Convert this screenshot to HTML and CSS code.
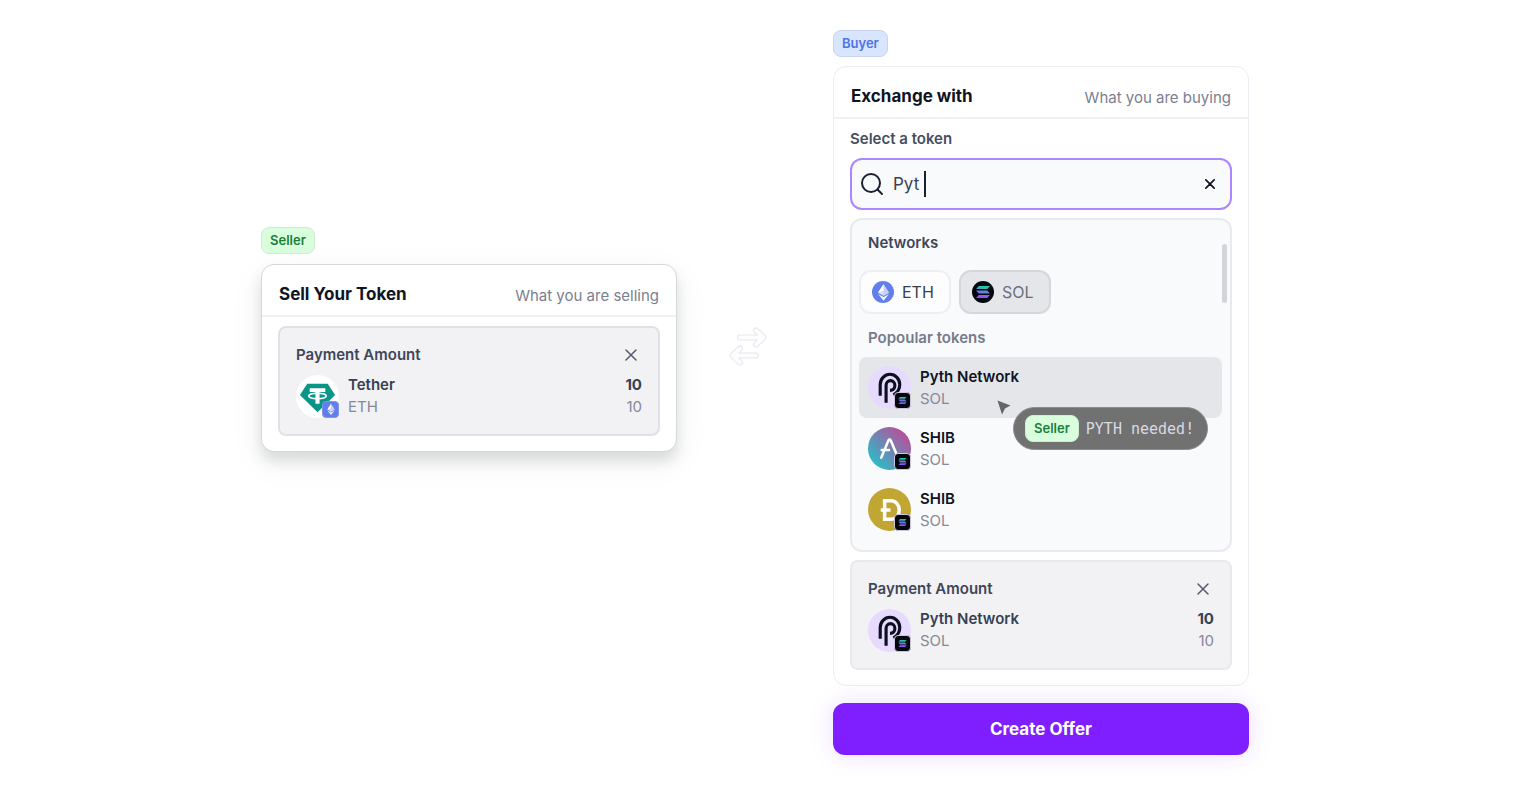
FILE: index.html
```html
<!DOCTYPE html>
<html lang="en">
<head>
    <meta charset="UTF-8">
    <meta name="viewport" content="width=device-width, initial-scale=1.0">
    <title>Token Exchange</title>
    <link rel="stylesheet" href="styles.css">
</head>
<body>
    <!-- Shared icons -->
    <svg class="sprite" aria-hidden="true">
        <defs>
            <linearGradient id="sol-gradient" x1="0" y1="1" x2="0.3" y2="0">
                <stop offset="0" stop-color="#9945ff"/>
                <stop offset="0.45" stop-color="#8065e8"/>
                <stop offset="1" stop-color="#22c5ad"/>
            </linearGradient>
            <linearGradient id="aave-gradient" x1="0" y1="1" x2="1" y2="0">
                <stop offset="0.15" stop-color="#2ebac6"/>
                <stop offset="0.85" stop-color="#b6509e"/>
            </linearGradient>
        </defs>
        <symbol id="close" viewBox="0 0 12 12">
            <path d="M1 1l10 10M11 1L1 11" fill="none" stroke="currentColor" stroke-linecap="round"/>
        </symbol>
        <symbol id="sol-mark" viewBox="0 0 16 14">
            <path d="M3 0h13l-3 3.600H0zM0 5.200h13l3 3.600H3zM3 10.400h13L13 14H0z" fill="url(#sol-gradient)"/>
        </symbol>
        <symbol id="eth-mark" viewBox="0 0 12 18">
            <path d="M6 0L0 9.200l6 3.300 6-3.300z" fill="#fff" opacity="0.75"/>
            <path d="M6 0v12.500l6-3.300z" fill="#c5d0fa"/>
            <path d="M6 0L0 9.200l6-2.500z" fill="#fff"/>
            <path d="M0 10.600L6 18l6-7.400-6 3.200z" fill="#eef1ff"/>
        </symbol>
        <symbol id="pyth" viewBox="0 0 44 44">
            <circle cx="22" cy="22" r="22" fill="#e6dafe"/>
            <path d="M12.500 30.500V19a10 10.500 0 0 1 20 0c0 5-2.500 8.500-6.500 10.500" fill="none" stroke="#0b0f1f" stroke-width="3.200"/>
            <path d="M18.500 37.500V20a4.500 5 0 0 1 9 0c0 3-2 5-5 5" fill="none" stroke="#0b0f1f" stroke-width="3.200"/>
        </symbol>
        <symbol id="tether" viewBox="0 0 44 44">
            <circle cx="22" cy="22" r="22" fill="#fff"/>
            <path d="M11.500 9h21L40 20.500 22 38 4 20.500z" fill="#0b9488"/>
            <path d="M14 13.500h16v4h-5.900v12h-4.200v-12H14z" fill="#fff"/>
            <ellipse cx="22" cy="21.500" rx="9" ry="2.800" fill="none" stroke="#fff" stroke-width="1.500"/>
        </symbol>
        <symbol id="aave" viewBox="0 0 44 44">
            <circle cx="22" cy="22" r="22" fill="url(#aave-gradient)"/>
            <path d="M13.500 31.500l7.500-18a1.200 1.200 0 0 1 2.200 0l6.300 15M14 23.500h7.500" fill="none" stroke="#fff" stroke-width="2.600" stroke-linecap="round"/>
        </symbol>
        <symbol id="doge" viewBox="0 0 44 44">
            <circle cx="22" cy="22" r="22" fill="#c2a633"/>
            <path d="M17 13h6.500a8.500 9.500 0 0 1 0 19H17zM13 22.500h10" fill="none" stroke="#fff" stroke-width="3.600"/>
        </symbol>
    </svg>

    <main class="exchange">
        <section class="side seller">
            <span class="tag tag-seller">Seller</span>
            <div class="card">
                <header class="card-header">
                    <h2>Sell Your Token</h2>
                    <p>What you are selling</p>
                </header>
                <div class="card-body">
                    <div class="payment">
                        <div class="payment-top">
                            <h3>Payment Amount</h3>
                            <button type="button" class="close" aria-label="Remove"><svg><use href="#close"/></svg></button>
                        </div>
                        <div class="token">
                            <span class="token-icon">
                                <svg class="coin"><use href="#tether"/></svg>
                                <span class="badge badge-eth"><svg><use href="#eth-mark"/></svg></span>
                            </span>
                            <span class="token-text"><strong>Tether</strong><small>ETH</small></span>
                            <span class="token-text amount"><strong>10</strong><small>10</small></span>
                        </div>
                    </div>
                </div>
            </div>
        </section>

        <!-- The dashed outline is the wide stroke showing round the narrow one -->
        <svg class="swap" viewBox="0 0 40 40" aria-hidden="true">
            <path class="swap-edge" d="M12 11.500h23M28 4.500l7.500 7-7.500 7M28 29.500H5M12 22.500l-7.500 7 7.500 7"/>
            <path class="swap-fill" d="M12 11.500h23M28 4.500l7.500 7-7.500 7M28 29.500H5M12 22.500l-7.500 7 7.500 7"/>
        </svg>

        <section class="side buyer">
            <span class="tag tag-buyer">Buyer</span>
            <div class="card card-flat">
                <header class="card-header">
                    <h2>Exchange with</h2>
                    <p>What you are buying</p>
                </header>
                <div class="card-body">
                    <label class="search-label" for="token-search">Select a token</label>
                    <div class="search">
                        <svg class="search-icon" viewBox="0 0 24 24" aria-hidden="true">
                            <circle cx="11" cy="11" r="9"/>
                            <path d="M17.500 17.500L22 22"/>
                        </svg>
                        <input type="text" id="token-search" value="Pyt" autocomplete="off">
                        <span class="caret"></span>
                        <button type="button" class="clear" aria-label="Clear"><svg><use href="#close"/></svg></button>
                    </div>

                    <div class="dropdown">
                        <span class="scrollbar"></span>
                        <h3>Networks</h3>
                        <div class="networks">
                            <button type="button" class="network">
                                <span class="network-icon network-eth"><svg><use href="#eth-mark"/></svg></span>ETH
                            </button>
                            <button type="button" class="network selected">
                                <span class="network-icon network-sol"><svg><use href="#sol-mark"/></svg></span>SOL
                            </button>
                        </div>
                        <h3 class="muted">Popoular tokens</h3>
                        <ul class="token-list">
                            <li>
                                <button type="button" class="token active">
                                    <span class="token-icon">
                                        <svg class="coin"><use href="#pyth"/></svg>
                                        <span class="badge"><svg><use href="#sol-mark"/></svg></span>
                                    </span>
                                    <span class="token-text"><strong>Pyth Network</strong><small>SOL</small></span>
                                </button>
                                <div class="hint">
                                    <svg class="pointer" viewBox="0 0 14 15"><path d="M0.500 0.500L13.500 5.500 8 8.500 5 14.500z"/></svg>
                                    <div class="hint-bubble">
                                        <span class="tag tag-seller">Seller</span>
                                        <span>PYTH needed!</span>
                                    </div>
                                </div>
                            </li>
                            <li>
                                <button type="button" class="token">
                                    <span class="token-icon">
                                        <svg class="coin"><use href="#aave"/></svg>
                                        <span class="badge"><svg><use href="#sol-mark"/></svg></span>
                                    </span>
                                    <span class="token-text"><strong>SHIB</strong><small>SOL</small></span>
                                </button>
                            </li>
                            <li>
                                <button type="button" class="token">
                                    <span class="token-icon">
                                        <svg class="coin"><use href="#doge"/></svg>
                                        <span class="badge"><svg><use href="#sol-mark"/></svg></span>
                                    </span>
                                    <span class="token-text"><strong>SHIB</strong><small>SOL</small></span>
                                </button>
                            </li>
                        </ul>
                    </div>

                    <div class="payment payment-light">
                        <div class="payment-top">
                            <h3>Payment Amount</h3>
                            <button type="button" class="close" aria-label="Remove"><svg><use href="#close"/></svg></button>
                        </div>
                        <div class="token">
                            <span class="token-icon">
                                <svg class="coin"><use href="#pyth"/></svg>
                                <span class="badge"><svg><use href="#sol-mark"/></svg></span>
                            </span>
                            <span class="token-text"><strong>Pyth Network</strong><small>SOL</small></span>
                            <span class="token-text amount"><strong>10</strong><small>10</small></span>
                        </div>
                    </div>
                </div>
            </div>
            <button type="button" class="create">Create Offer</button>
        </section>
    </main>
</body>
</html>
```
FILE: styles.css
```css
* {
    box-sizing: border-box;
}
body {
    font-family: Inter, "Liberation Sans", sans-serif;
    font-size: 16px;
    margin: 0;
    background: #fff;
    color: #374151;
}
h2, h3, p, ul {
    margin: 0;
    padding: 0;
}
button {
    font: inherit;
    color: inherit;
    border: 0;
    padding: 0;
    background: none;
    cursor: pointer;
}
.sprite {
    position: absolute;
    width: 0;
    height: 0;
}

/* Page */
.exchange {
    display: grid;
    grid-template-columns: minmax(0, 416px) 156px minmax(0, 416px);
    justify-content: center;
    align-items: center;
    padding: 30px 10px 30px 0;
}
.side {
    display: flex;
    flex-direction: column;
    align-items: flex-start;
}
.seller {
    margin-bottom: 106px;
}
.swap {
    width: 40px;
    height: 40px;
    justify-self: center;
    margin-bottom: 94px;
    margin-right: 14px;
    fill: none;
    stroke-linecap: round;
    stroke-linejoin: round;
}
.swap-edge {
    stroke: #e6e7ea;
    stroke-width: 6;
}
.swap-fill {
    stroke: #fdfdff;
    stroke-width: 4;
}

/* Tags */
.tag {
    font-size: 13px;
    line-height: 25px;
    font-weight: 600;
    padding: 0 8px;
    border: 1px solid transparent;
    border-radius: 8px;
}
.tag-seller {
    background: #d9fedd;
    border-color: #cdeed1;
    color: #1a7f37;
}
.tag-buyer {
    background: #d8e5ff;
    border-color: #c9d4ea;
    color: #4f73e6;
}

/* Cards */
.card {
    width: 100%;
    margin-top: 10px;
    background: #fff;
    border: 1px solid #d5d8d8;
    border-radius: 13px;
    box-shadow: 0 9px 14px rgba(40, 60, 50, 0.15), 0 10px 36px rgba(40, 60, 50, 0.06);
}
.card-flat {
    margin-top: 9px;
    border-color: #ececf3;
    box-shadow: none;
}
.card-header {
    display: flex;
    justify-content: space-between;
    align-items: center;
    height: 52px;
    padding: 8px 17px 0;
    border-bottom: 2px solid #f0f0f6;
}
.card-header h2 {
    font-size: 17px;
    font-weight: 700;
    color: #0f1424;
}
.card-header p {
    font-size: 15px;
    padding-top: 2px;
    color: #7b8090;
}
.card-body {
    padding: 9px 16px 15px;
}
h3 {
    font-size: 15px;
    line-height: 22px;
    font-weight: 600;
    color: #3f4659;
}

/* Search */
.search-label {
    display: block;
    font-size: 15px;
    line-height: 22px;
    font-weight: 600;
    color: #474e60;
    padding-bottom: 8px;
}
.search {
    display: flex;
    align-items: center;
    height: 52px;
    padding: 0 15px 0 8px;
    background: #f9fafc;
    border: 2px solid #ab87ff;
    border-radius: 12px;
}
.search-icon {
    width: 24px;
    height: 24px;
    fill: none;
    stroke: #1a2030;
    stroke-width: 2;
    stroke-linecap: round;
}
.search input {
    width: 31px;
    margin-left: 9px;
    padding: 0;
    border: 0;
    outline: 0;
    background: none;
    font: inherit;
    font-size: 17px;
    color: #3a4152;
}
.caret {
    width: 2px;
    height: 26px;
    background: #1a2030;
}
.clear {
    width: 10px;
    height: 10px;
    margin-left: auto;
    color: #0f1424;
}
.clear svg, .close svg {
    display: block;
    width: 100%;
    height: 100%;
}
.clear svg {
    stroke-width: 2;
}

/* Dropdown */
.dropdown {
    position: relative;
    margin-top: 8px;
    padding: 12px 8px 10px;
    background: #f9fafc;
    border: 2px solid #e9eaee;
    border-radius: 12px;
}
.dropdown h3 {
    padding-left: 8px;
}
.dropdown .muted {
    color: #767b8a;
}
.scrollbar {
    position: absolute;
    top: 24px;
    right: 3px;
    width: 5px;
    height: 59px;
    border-radius: 3px;
    background: #d3d4da;
}
.networks {
    display: flex;
    gap: 8px;
    padding: 16px 0 13px;
    margin-left: -1px;
}
.network {
    display: flex;
    align-items: center;
    gap: 8px;
    width: 92px;
    height: 44px;
    padding: 0 11px;
    background: #fdfdfe;
    border: 2px solid #eeeff2;
    border-radius: 12px;
}
.network.selected {
    background: #e5e6ea;
    border-color: #d6d7dc;
    color: #6a6f7e;
}
.network-icon {
    display: grid;
    place-items: center;
    width: 22px;
    height: 22px;
    border-radius: 50%;
}
.network-eth {
    background: #627eea;
}
.network-eth svg {
    width: 11px;
    height: 17px;
}
.network-sol {
    background: #05070f;
}
.network-sol svg {
    width: 14px;
    height: 12px;
}

/* Tokens */
.token-list {
    list-style: none;
    padding-top: 8px;
    margin-left: -1px;
}
.token-list li {
    position: relative;
}
.token-list .token {
    width: 100%;
    height: 61px;
    padding: 0 9px;
    border-radius: 8px;
}
.token-list .token.active {
    background: #e5e6ea;
}
.token-list strong {
    color: #0f1424;
}
.token {
    display: flex;
    align-items: center;
    text-align: left;
}
.token-icon {
    position: relative;
    width: 43px;
    height: 43px;
}
.coin {
    display: block;
    width: 43px;
    height: 43px;
}
.badge {
    position: absolute;
    right: 0;
    bottom: 0;
    display: grid;
    place-items: center;
    width: 17px;
    height: 17px;
    background: #05070f;
    border: 1px solid #cbc6dc;
    border-radius: 4px;
}
.badge svg {
    width: 9px;
    height: 7px;
}
.badge-eth {
    background: #627eea;
    border-color: #7f95ee;
}
.badge-eth svg {
    width: 8px;
    height: 11px;
}
.token-text {
    display: flex;
    flex-direction: column;
    margin-left: 9px;
    font-size: 15px;
    line-height: 22px;
}
.token-text strong {
    font-weight: 600;
}
.token-text small {
    font-size: 15px;
    color: #858998;
}
.amount {
    margin-left: auto;
    text-align: right;
}
.amount strong {
    font-weight: 700;
}

/* Payment box */
.payment {
    padding: 16px;
    background: #f2f2f5;
    border: 2px solid #dee1e5;
    border-radius: 8px;
}
.payment-light {
    margin-top: 8px;
    border-color: #e8e9ec;
}
.payment-top {
    display: flex;
    justify-content: space-between;
    align-items: center;
    margin-bottom: 8px;
}
.close {
    width: 12px;
    height: 12px;
    margin-right: 5px;
    color: #555b6b;
}
.close svg {
    stroke-width: 1.5;
}

/* Hint over the token list */
.hint {
    position: absolute;
    z-index: 1;
    top: 43px;
    left: 138px;
}
.pointer {
    display: block;
    width: 14px;
    height: 15px;
    fill: #666;
}
.hint-bubble {
    display: flex;
    align-items: center;
    gap: 7px;
    height: 43px;
    margin: -8px 0 0 16px;
    padding: 0 13px 0 11px;
    background: #717171;
    border: 1px solid #8b8b98;
    border-radius: 22px;
    color: #d9dbe6;
    font-family: "DejaVu Sans Mono", monospace;
    font-size: 15px;
    white-space: nowrap;
}
.hint .tag {
    font-family: Inter, "Liberation Sans", sans-serif;
}

/* Submit */
.create {
    width: 100%;
    height: 52px;
    margin-top: 17px;
    background: #7f1fff;
    border-radius: 12px;
    box-shadow: 0 0 24px rgba(127, 31, 255, 0.15);
    color: #fff;
    font-size: 17px;
    font-weight: 700;
}
```
